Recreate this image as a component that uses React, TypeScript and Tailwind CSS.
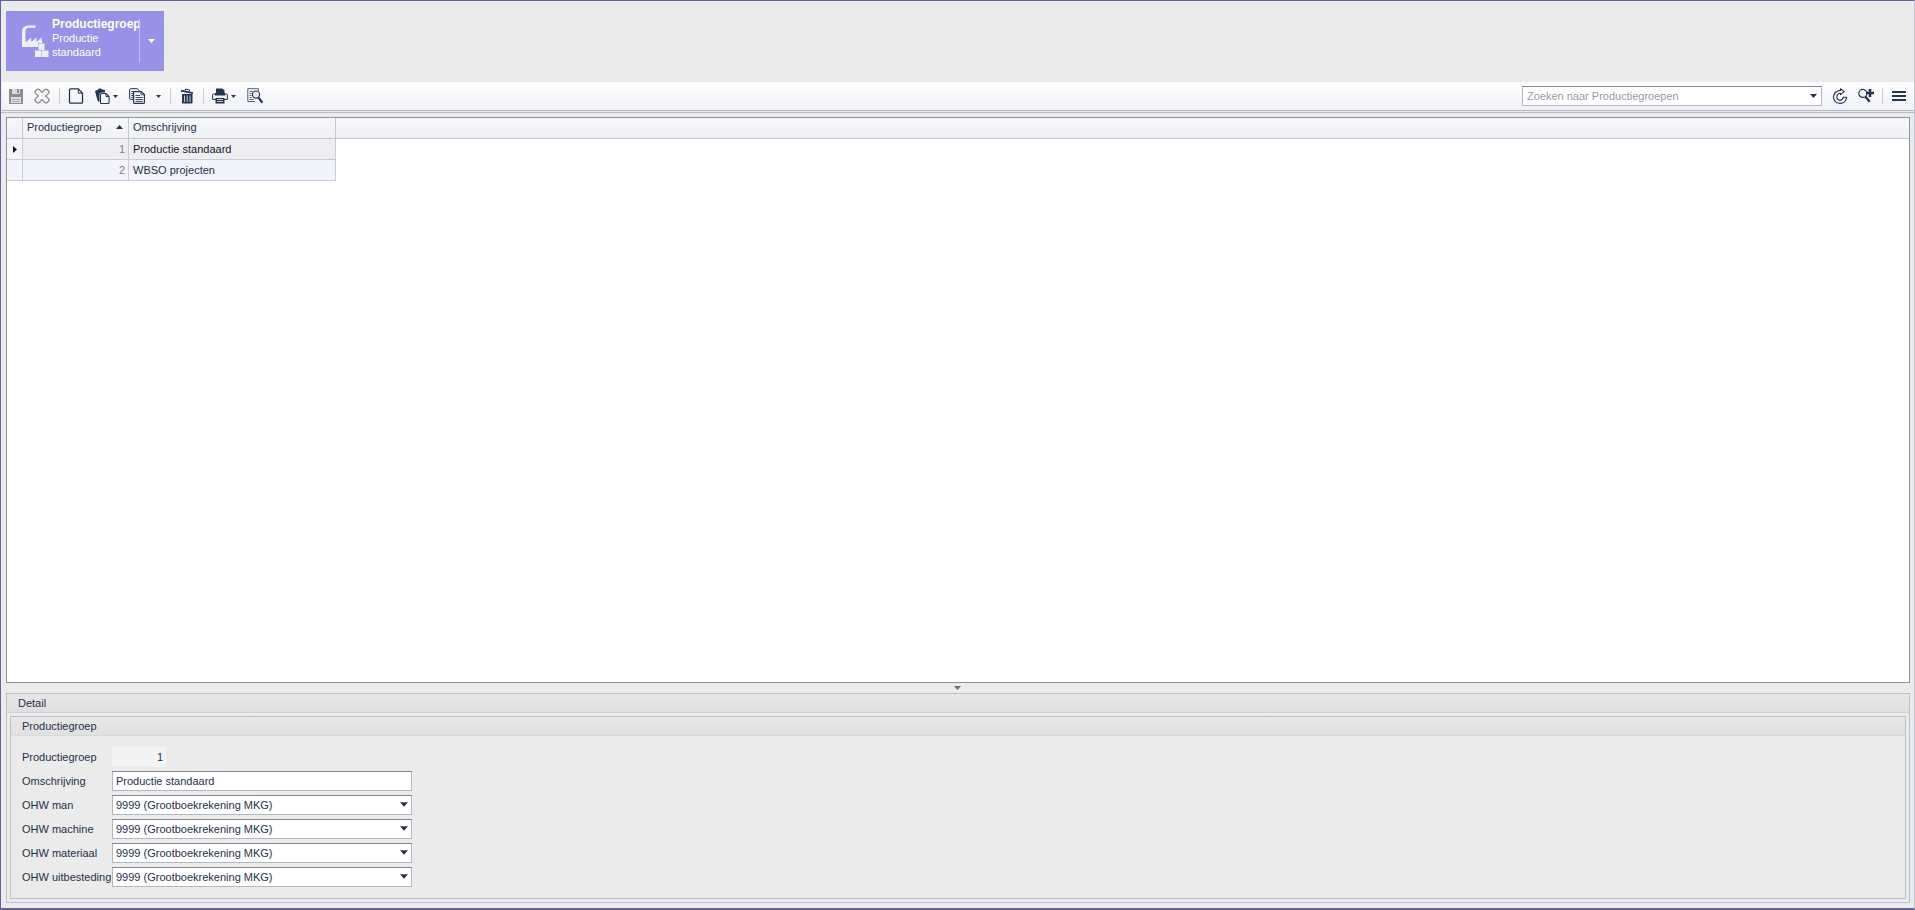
import { useState } from 'react';
import type { ReactNode } from 'react';

interface ProductionGroup {
  id: number;
  description: string;
}

const GROUPS: ProductionGroup[] = [
  { id: 1, description: 'Productie standaard' },
  { id: 2, description: 'WBSO projecten' },
];

const LEDGER_FIELDS = [
  { id: 'ohw-man', label: 'OHW man' },
  { id: 'ohw-machine', label: 'OHW machine' },
  { id: 'ohw-materiaal', label: 'OHW materiaal' },
  { id: 'ohw-uitbesteding', label: 'OHW uitbesteding' },
];

const LEDGER_ACCOUNT = '9999 (Grootboekrekening MKG)';

/* ---------- Icons ---------- */

function Caret({ className = 'h-1 w-[7px]' }: { className?: string }) {
  return (
    <svg className={`shrink-0 ${className}`} viewBox="0 0 7 4" fill="currentColor" aria-hidden="true">
      <path d="M0 0h7L3.5 4z" />
    </svg>
  );
}

function Icon({ children, className = 'text-[#26344f]' }: { children: ReactNode; className?: string }) {
  return (
    <svg className={`size-4 shrink-0 ${className}`} viewBox="0 0 16 16" fill="none" stroke="currentColor" aria-hidden="true">
      {children}
    </svg>
  );
}

function SaveIcon() {
  return (
    <Icon className="text-[#8b8c94]">
      <path d="M1 1h14v15H1z" fill="currentColor" stroke="none" />
      <path d="M4 1h8v5H4z" fill="#d9dae0" stroke="none" />
      <path d="M9 1h2v4H9z" fill="currentColor" stroke="none" />
      <path d="M3 9h10v6H3z" fill="#dfe0e6" stroke="none" />
      <path d="M4 11.5h8M4 13.5h8" stroke="#a6a7ae" />
    </Icon>
  );
}

function CancelIcon() {
  return (
    <Icon className="text-[#8b8c94]">
      <path
        d="M8 4.6 10.6 1.6Q12 .6 13.2 1.6L14.6 3Q15.6 4.2 14.5 5.4L11.8 8l2.7 2.6q1.1 1.2.1 2.4l-1.4 1.4q-1.2 1-2.6 0L8 11.4l-2.6 3q-1.4 1-2.6 0L1.4 13q-1-1.2.1-2.4L4.2 8 1.5 5.4Q.4 4.2 1.4 3l1.4-1.4q1.2-1 2.6 0z"
        strokeWidth="1.3"
      />
    </Icon>
  );
}

function NewIcon() {
  return (
    <Icon>
      <path d="M2.5.8h7.8l4.2 4.4v9q0 1-1 1h-11q-1 0-1-1V1.8q0-1 1-1z" strokeWidth="1.3" />
      <path d="M10.3 1v4.2h4" />
    </Icon>
  );
}

function PasteIcon() {
  return (
    <Icon>
      <path d="M1 3 4 1.8Q4.4.2 6 .4 7.6.2 8 1.6L11 2v2.5H7.5l-2 1V14L3.6 13z" fill="currentColor" stroke="none" />
      <path d="M7.5 5.5h4.6l3 3v6q0 1-1 1H7.5q-1 0-1-1v-8q0-1 1-1z" fill="#f8f9fc" strokeWidth="1.1" />
      <path d="M12 5.8v2.8h3" />
    </Icon>
  );
}

function CopyIcon() {
  return (
    <Icon>
      <path d="M10 3V2.5L8.4.7H1.6q-1 0-1 1v8.6q0 1 1 1h2.6" />
      <path d="M2.2 3.5h3M2.2 5.5h2M2.2 7.5h2M2.2 9.3h2" strokeWidth=".9" />
      <path d="M5.6 3.6h6.6l3.2 3v7.8q0 1-1 1H5.6q-1 0-1-1V4.6q0-1 1-1z" fill="#f8f9fc" strokeWidth="1.2" />
      <path d="M12 3.8v3h3.2M6.5 7.5H11M6.5 9.5h7.2M6.5 11.5h7.2M6.5 13.4h7.2" strokeWidth=".9" />
    </Icon>
  );
}

function DeleteIcon() {
  return (
    <Icon>
      <path d="M2 2.6 14 5.2" strokeWidth="1.8" />
      <path d="M6.5 2.4V1l4 1v1.4" />
      <path d="M3 6h10.5v8.6q0 1-1 1H4q-1 0-1-1z" fill="currentColor" stroke="none" />
      <path d="M5.5 7.5v6.4M8.2 7.5v6.4M11 7.5v6.4" stroke="#c6cad6" />
    </Icon>
  );
}

function PrintIcon() {
  return (
    <Icon>
      <path d="M4 .5h6.5l2 2V5H4z" fill="currentColor" stroke="none" />
      <path d="M1.6 6h12.8q1 0 1 1v4.5H.6V7q0-1 1-1z" fill="#f1f3f8" />
      <path d="M3 5h10v2.5H3z" fill="currentColor" stroke="none" />
      <path d="M3.5 10h9v5.5h-9z" fill="currentColor" stroke="none" />
      <path d="M5 11.5h6M5 13.5h6" stroke="#c6cad6" />
    </Icon>
  );
}

function PreviewIcon() {
  return (
    <Icon>
      <path d="M11.5 3V.7H.8v12.8h7" stroke="#59647a" />
      <path d="M2.5 3.5h3M2.5 5.5h2M2.5 7.5h2M2.5 9.5h2M2.5 11.5h4" stroke="#59647a" />
      <circle cx="9" cy="6.6" r="3.6" fill="#e9edf5" strokeWidth="1.2" />
      <path d="m11.5 9.6 3.9 5.2" strokeWidth="2.2" />
    </Icon>
  );
}

function RefreshIcon() {
  return (
    <Icon>
      <path
        d="M8.6.8 12.2 3.6 8.6 6.6V5.2Q5 5.4 4.8 9 5 12.2 8 12.4q2.8-.2 3.4-3.2h3.2q-.8 6-6.6 6.2Q2 15 1.4 9 2 3 8.6 2.4z"
        strokeWidth="1.1"
        strokeLinejoin="round"
      />
    </Icon>
  );
}

function SearchPlusIcon() {
  return (
    <Icon>
      <circle cx="4.8" cy="5.4" r="4" strokeWidth="1.2" />
      <path d="m7.4 8.8 4.4 5" strokeWidth="2.4" />
      <path d="M12 1v8M8 5h8" strokeWidth="2.6" />
    </Icon>
  );
}

function MenuIcon() {
  return (
    <Icon>
      <path d="M1 4h14M1 8h14M1 12h14" strokeWidth="2" />
    </Icon>
  );
}

function FactoryIcon() {
  return (
    <svg className="h-[34px] w-7 shrink-0" viewBox="0 0 28 34" fill="#efeffc" aria-hidden="true">
      <path d="M1 24V7.5Q1.2 4.4 5 3 9 1.6 15 2.6L14 5 7.6 4.8Q5 5 4.4 8v10.6l.8.4 5-4.4V19l5.2-4.6V19l5.2-4.6L21.4 20H17v4z" />
      <path d="M17.5 20.5h6v6.5h-6zM14 27.5h6.5V34H14zM21 27.5h6.5V34H21z" />
    </svg>
  );
}

/* ---------- Shared parts ---------- */

function ToolButton({
  label,
  children,
  disabled,
  className = 'w-6',
}: {
  label: string;
  children: ReactNode;
  disabled?: boolean;
  className?: string;
}) {
  return (
    <button
      type="button"
      aria-label={label}
      title={label}
      disabled={disabled}
      className={`flex h-6 shrink-0 items-center justify-center ${className}`}
    >
      {children}
    </button>
  );
}

function Divider() {
  return <span className="mx-1 h-4 w-px shrink-0 bg-[#c9cad2]" />;
}

/* ---------- App ---------- */

export default function App() {
  const [selectedId, setSelectedId] = useState(1);
  const [search, setSearch] = useState('');
  const selected = GROUPS.find((group) => group.id === selectedId) ?? GROUPS[0];

  return (
    <div className="flex min-h-screen flex-col border-t border-r border-b-2 border-l border-[#67619b] border-r-[#c3c5d2] bg-[#ebebeb] font-['Liberation_Sans',Arial,sans-serif] text-[11px] leading-4 text-[#26304a]">
      {/* Ribbon */}
      <header className="px-[5px] pt-2.5 pb-[11px]">
        <div className="flex h-15 w-[158px] bg-[#9791e8] text-white">
          <button type="button" className="flex min-w-0 flex-1 pl-[15px] text-left">
            <span className="pt-3">
              <FactoryIcon />
            </span>
            <span className="ml-[3px] pt-1.5 leading-[14px]">
              <span className="block text-[12px] font-bold">Productiegroep</span>
              <span className="block w-16">{GROUPS[0].description}</span>
            </span>
          </button>
          <span className="my-2 w-px bg-[#c3bff3]" />
          <button type="button" aria-label="Meer" className="flex w-6 items-center justify-center pr-0.5">
            <Caret />
          </button>
        </div>
      </header>

      {/* Toolbar */}
      <div className="ml-px flex h-[29px] items-center border-b border-[#b4b6c1] bg-linear-to-b from-white to-[#f0f1f6] px-px">
        <ToolButton label="Opslaan" disabled className="w-[26px]">
          <SaveIcon />
        </ToolButton>
        <ToolButton label="Annuleren" disabled className="w-[26px]">
          <CancelIcon />
        </ToolButton>
        <Divider />
        <ToolButton label="Nieuw">
          <NewIcon />
        </ToolButton>
        <ToolButton label="Plakken" className="ml-1.5 w-6 gap-[3px]">
          <PasteIcon />
          <Caret className="h-[3px] w-[5px]" />
        </ToolButton>
        <ToolButton label="Kopiëren" className="ml-2 w-[22px]">
          <CopyIcon />
        </ToolButton>
        <ToolButton label="Kopieeropties" className="w-[18px] pl-0.5">
          <Caret className="h-[3px] w-[5px]" />
        </ToolButton>
        <Divider />
        <ToolButton label="Verwijderen">
          <DeleteIcon />
        </ToolButton>
        <Divider />
        <ToolButton label="Afdrukken" className="w-8 gap-[3px]">
          <PrintIcon />
          <Caret className="h-[3px] w-[5px]" />
        </ToolButton>
        <ToolButton label="Afdrukvoorbeeld" className="w-[30px]">
          <PreviewIcon />
        </ToolButton>

        <div className="ml-auto flex h-5 w-[300px] items-center border border-[#b4b6c1] border-t-[#85868f] bg-white">
          <input
            type="text"
            aria-label="Zoeken naar Productiegroepen"
            placeholder="Zoeken naar Productiegroepen"
            value={search}
            onChange={(event) => setSearch(event.target.value)}
            className="h-full min-w-0 flex-1 px-1 outline-none placeholder:text-[#9a9ba3]"
          />
          <button type="button" aria-label="Zoekgeschiedenis" className="flex h-full w-4 items-center justify-center">
            <Caret />
          </button>
        </div>
        <ToolButton label="Vernieuwen" className="ml-1 w-7">
          <RefreshIcon />
        </ToolButton>
        <ToolButton label="Uitgebreid zoeken">
          <SearchPlusIcon />
        </ToolButton>
        <Divider />
        <ToolButton label="Menu" className="mr-0.5 w-6">
          <MenuIcon />
        </ToolButton>
      </div>
      <div className="mt-px h-px bg-[#b9bac5]" />

      {/* Overview */}
      <main className="mt-1 mr-1 ml-[5px] flex-1 border border-[#8f919b] bg-white">
        <table className="w-full table-fixed border-separate border-spacing-0 text-left">
          <colgroup>
            <col className="w-4" />
            <col className="w-[106px]" />
            <col className="w-[207px]" />
            <col />
          </colgroup>
          <thead>
            <tr className="h-[21px] bg-linear-to-b from-[#f6f7fa] to-[#f0f1f4]">
              <th className="border-r border-b border-[#c5c7d0] p-0" aria-label="Selectie" />
              <th className="border-r border-b border-[#c5c7d0] px-1 pt-0 pb-0.5 font-normal" aria-sort="ascending">
                <span className="flex items-center justify-between pr-px">
                  Productiegroep
                  <Caret className="h-1 w-[7px] rotate-180" />
                </span>
              </th>
              <th className="border-r border-b border-[#c5c7d0] px-1 pt-0 pb-0.5 font-normal">Omschrijving</th>
              <th className="border-b border-[#c5c7d0] p-0" aria-hidden="true" />
            </tr>
          </thead>
          <tbody>
            {GROUPS.map((group) => {
              const isSelected = group.id === selectedId;
              const background = isSelected ? 'bg-[#eeeef1]' : 'bg-[#f1f4fb]';

              return (
                <tr key={group.id} className="h-[21px]" onClick={() => setSelectedId(group.id)}>
                  <td className="border-r border-b border-[#c9ccd6] bg-[#f4f5f8] p-0 text-[#15171f]">
                    {isSelected && (
                      <svg className="mx-auto h-[7px] w-1" viewBox="0 0 4 7" fill="currentColor" aria-hidden="true">
                        <path d="M0 0v7l4-3.5z" />
                      </svg>
                    )}
                  </td>
                  <td className={`border-r border-b border-[#c9ccd6] px-[3px] py-0 text-right text-[#80828b] ${background}`}>
                    {group.id}
                  </td>
                  <td
                    className={`border-r border-b border-[#c9ccd6] px-1 py-0 ${background} ${isSelected ? 'text-[#15171f]' : ''}`}
                  >
                    {group.description}
                  </td>
                  <td />
                </tr>
              );
            })}
          </tbody>
        </table>
      </main>

      <div className="flex h-2.5 items-center justify-center text-[#6f717b]">
        <Caret />
      </div>

      {/* Detail */}
      <section className="mr-1 mb-[5px] ml-[5px] border border-[#bfc1c8] px-[3px] pb-[3px]">
        <h2 className="-mx-[3px] mb-[3px] border-b border-[#d3d4d7] bg-linear-to-b from-[#e8e8e8] to-[#e0e0e0] px-[11px] py-px">
          Detail
        </h2>
        <div className="border border-[#bfc1c8] pb-[11px]">
          <h3 className="border-b border-[#d8d9db] bg-linear-to-b from-[#e8e8e8] to-[#e0e0e0] px-[11px] py-px">
            Productiegroep
          </h3>
          <form className="mt-[11px] ml-[11px] grid grid-cols-[90px_300px] items-center gap-y-1">
            <label htmlFor="productiegroep">Productiegroep</label>
            <input
              id="productiegroep"
              readOnly
              value={selected.id}
              className="h-5 w-[54px] bg-[#f3f3f6] px-[3px] text-right outline-none"
            />
            <label htmlFor="omschrijving">Omschrijving</label>
            <input
              key={selected.id}
              id="omschrijving"
              type="text"
              defaultValue={selected.description}
              className="h-5 border border-[#b4b6c1] border-t-[#85868f] bg-white px-[3px] outline-none"
            />
            {LEDGER_FIELDS.map((field) => (
              <div key={field.id} className="contents">
                <label htmlFor={field.id} className="whitespace-nowrap">
                  {field.label}
                </label>
                <div className="relative">
                  <select
                    id={field.id}
                    className="block h-5 w-full appearance-none border border-[#b4b6c1] border-t-[#85868f] bg-white px-[3px] outline-none"
                  >
                    <option>{LEDGER_ACCOUNT}</option>
                  </select>
                  <Caret className="pointer-events-none absolute top-[7px] right-1 h-[5px] w-2" />
                </div>
              </div>
            ))}
          </form>
        </div>
      </section>
    </div>
  );
}
